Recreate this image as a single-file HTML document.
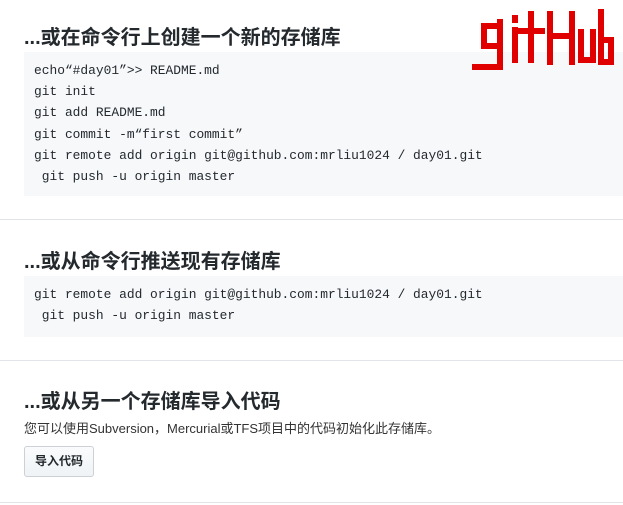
<!DOCTYPE html>
<html><head><meta charset="utf-8"><style>
body{margin:0;width:623px;height:505px;background:#fff;position:relative;overflow:hidden;font-family:"Liberation Sans","Noto Sans CJK SC",sans-serif;color:#24292e}
h3{position:absolute;left:24px;margin:0;font-size:20px;font-weight:bold;line-height:24px}
.code{position:absolute;left:24px;right:0;background:#f6f8fa;font-family:"Liberation Mono","Noto Sans CJK SC",monospace;font-size:12.9px;line-height:21.2px;padding:8px 10px;box-sizing:border-box;white-space:pre;color:#24292e}
.hr{position:absolute;left:0;right:0;height:1px;background:#e1e4e8}
.btn{position:absolute;left:24px;top:446px;width:70px;height:31px;box-sizing:border-box;border:1px solid #cdd0d4;border-radius:3px;background:linear-gradient(#fafbfc,#eff3f6);font-size:12px;font-weight:bold;text-align:center;line-height:29px}
</style></head><body>
<h3 style="top:26px">...或在命令行上创建一个新的存储库</h3>
<div class="code" style="top:52px;height:144px">echo“#day01”>> README.md
git init
git add README.md
git commit -m“first commit”
git remote add origin git@github.com:mrliu1024 / day01.git
 git push -u origin master</div>
<div class="hr" style="top:219px"></div>
<h3 style="top:250px">...或从命令行推送现有存储库</h3>
<div class="code" style="top:276px;height:61px">git remote add origin git@github.com:mrliu1024 / day01.git
 git push -u origin master</div>
<div class="hr" style="top:360px"></div>
<h3 style="top:390px">...或从另一个存储库导入代码</h3>
<div style="position:absolute;left:24px;top:418px;font-size:13px;color:#333">您可以使用Subversion，Mercurial或TFS项目中的代码初始化此存储库。</div>
<div class="btn">导入代码</div>
<div class="hr" style="top:502px"></div>
<svg style="position:absolute;left:0;top:0" width="623" height="100" fill="none" stroke="#e00000" stroke-width="6" stroke-linecap="square">
<path d="M500 26 L484 26 L484 46 L500 46 M500 22 L500 67 L475 67"/>
<path d="M515 30 L515 60 M515 18 L515 20"/>
<path d="M531 14 L531 60 M521 31 L542 31"/>
<path d="M550 14 L550 62 M550 36 L572 36 M572 14 L572 62"/>
<path d="M581 32 L581 60 L593 60 L593 32"/>
<path d="M601 12 L601 62 L611 62 L611 40 L601 40"/>
</svg>
</body></html>
